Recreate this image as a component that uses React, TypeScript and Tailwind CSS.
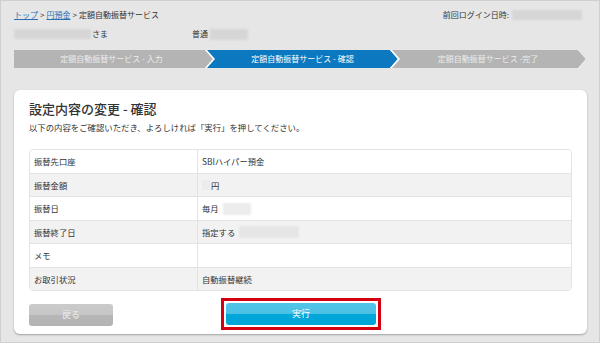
import React from "react";

const Blur = ({ w, h = 10, c = "bg-[#d6d6d6]" }: { w: number; h?: number; c?: string }) => (
  <span className={`inline-block ${c} blur-[1px] rounded-[1px] align-middle`} style={{ width: w, height: h }} />
);

const rows: { label: string; value: React.ReactNode; h: string; bg: string }[] = [
  { label: "振替先口座", value: <span>SBIハイパー預金</span>, h: "h-[23px]", bg: "bg-white" },
  {
    label: "振替金額",
    value: (
      <span className="flex items-center">
        <span className="inline-block w-[8px] h-[10px] bg-[#ececec] blur-[0.5px]" />
        <span className="ml-[1px]">円</span>
      </span>
    ),
    h: "h-[23px]",
    bg: "bg-[#f2f2f2]",
  },
  {
    label: "振替日",
    value: (
      <span className="flex items-center">
        <span>毎月</span>
        <span className="ml-[4px] inline-block w-[28px] h-[12px] bg-[#ececec] blur-[1px]" />
      </span>
    ),
    h: "h-[24px]",
    bg: "bg-white",
  },
  {
    label: "振替終了日",
    value: (
      <span className="flex items-center">
        <span>指定する</span>
        <span className="ml-[4px] inline-block w-[60px] h-[12px] bg-[#e6e6e6] blur-[1px]" />
      </span>
    ),
    h: "h-[23px]",
    bg: "bg-[#f2f2f2]",
  },
  { label: "メモ", value: null, h: "h-[24px]", bg: "bg-white" },
  { label: "お取引状況", value: <span>自動振替継続</span>, h: "h-[23px]", bg: "bg-[#f2f2f2]" },
];

export default function App() {
  return (
    <div className="w-[600px] h-[343px] overflow-hidden bg-[#e6e6e6] border border-[#cfcfcf] px-[13px] text-[#333] font-['Noto_Sans_CJK_JP','Noto_Sans_CJK_SC',sans-serif]">
      {/* breadcrumb */}
      <div className="mt-[9px] h-[10px] flex items-center justify-between text-[8px] leading-[10px]">
        <div className="flex items-center">
          <span className="text-[#2b6fb3] underline">トップ</span>
          <span className="mx-[2px]">&gt;</span>
          <span className="text-[#2b6fb3] underline">円預金</span>
          <span className="mx-[2px]">&gt;</span>
          <span>定額自動振替サービス</span>
        </div>
        <div className="flex items-center mr-[4px]">
          <span>前回ログイン日時:</span>
          <span className="ml-[3px]"><Blur w={70} h={10} /></span>
        </div>
      </div>
      {/* account row */}
      <div className="mt-[9px] h-[10px] flex items-center text-[8px] leading-[10px]">
        <Blur w={77} h={10} />
        <span className="ml-[1px]">さま</span>
        <span className="ml-[84px]">普通</span>
        <span className="ml-[2px]"><Blur w={38} h={11} /></span>
      </div>
      {/* step bar */}
      <div className="mt-[11px] h-[18px] flex text-[8px] leading-none">
        <div className="w-[199px] h-[18px] bg-[#b4b4b4] text-[#ececec] flex items-center justify-center pr-[4px] [clip-path:polygon(0_0,calc(100%_-_8px)_0,100%_50%,calc(100%_-_8px)_100%,0_100%)]">
          定額自動振替サービス - 入力
        </div>
        <div className="ml-[-8px] w-[193px] h-[18px] bg-white pl-[2px] [clip-path:polygon(0_0,calc(100%_-_8px)_0,100%_50%,calc(100%_-_8px)_100%,0_100%,8px_50%)]">
          <div className="w-full h-full bg-[#0b78bf] text-white flex items-center justify-center [clip-path:polygon(0_0,calc(100%_-_8px)_0,100%_50%,calc(100%_-_8px)_100%,0_100%,8px_50%)]">
            定額自動振替サービス - 確認
          </div>
        </div>
        <div className="ml-[-8px] w-[196px] h-[18px] bg-white pl-[2px] [clip-path:polygon(0_0,calc(100%_-_8px)_0,100%_50%,calc(100%_-_8px)_100%,0_100%,8px_50%)]">
          <div className="w-full h-full bg-[#b4b4b4] text-[#ececec] flex items-center justify-center pr-[2px] [clip-path:polygon(0_0,calc(100%_-_8px)_0,100%_50%,calc(100%_-_8px)_100%,0_100%,8px_50%)]">
            定額自動振替サービス -完了
          </div>
        </div>
      </div>
      {/* card */}
      <div className="mt-[22px] w-[573px] bg-white rounded-[6px] shadow-[0_1px_2px_rgba(0,0,0,0.3)] px-[15px] pt-[11px] pb-[4px]">
        <div className="text-[13px] leading-[15px] font-medium text-[#333]">設定内容の変更 - 確認</div>
        <div className="mt-[5px] text-[8.4px] leading-[12px]">
          以下の内容をご確認いただき、よろしければ「実行」を押してください。
        </div>
        <div className="mt-[16px] border border-[#e3e3e3] rounded-[4px] overflow-hidden text-[8.3px]">
          {rows.map((r, i) => (
            <div key={i} className={`flex ${r.h} ${r.bg} ${i > 0 ? "border-t border-[#e3e3e3]" : ""}`}>
              <div className="w-[168px] border-r border-[#e3e3e3] flex items-center pl-[4px]">{r.label}</div>
              <div className="flex-1 flex items-center pl-[4px]">{r.value}</div>
            </div>
          ))}
        </div>
        <div className="mt-[7px] flex items-center">
          <button className="w-[84px] h-[22px] rounded-[3px] bg-[linear-gradient(#cbcbcb_0%,#c6c6c6_50%,#b6b6b6_50%,#b4b4b4_100%)] text-[#eeeeee] text-[9px] flex items-center justify-center mt-[2px]">
            戻る
          </button>
          <div className="ml-[108px] border-[3px] border-[#d5000f] px-[2px] py-[2px]">
            <button className="w-[150px] h-[22px] rounded-[3px] bg-[linear-gradient(#52c4e8_0%,#4cc1e6_50%,#00a7da_50%,#00a5d8_100%)] text-white text-[9px] flex items-center justify-center">
              実行
            </button>
          </div>
        </div>
      </div>
    </div>
  );
}
